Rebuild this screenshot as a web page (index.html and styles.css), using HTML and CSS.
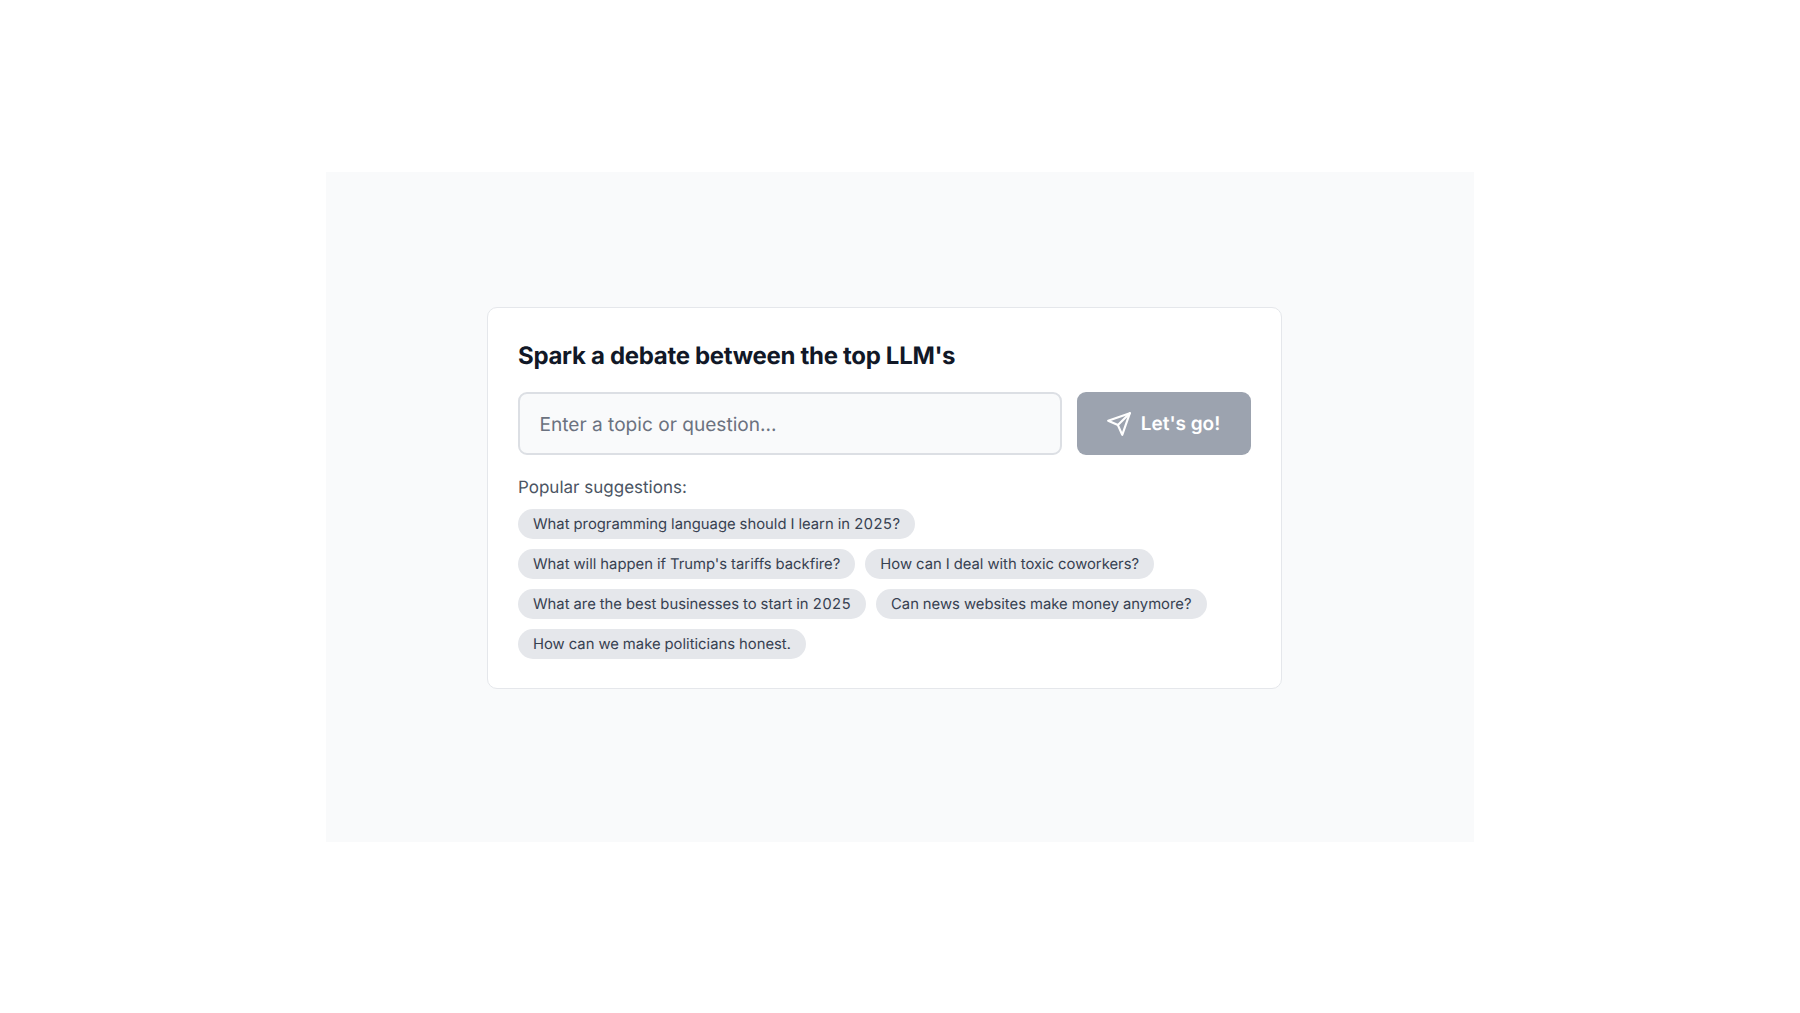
FILE: index.html
```html
<!DOCTYPE html>
<html lang="en">
<head>
  <meta charset="UTF-8" />
  <title>Spark a debate</title>
  <link rel="stylesheet" href="styles.css">
</head>
<body>

<div class="panel">
  <div class="card">
    <h1>Spark a debate between the top LLM's</h1>

    <div class="ask-row">
      <input class="ask-input" type="text" placeholder="Enter a topic or question...">
      <button class="ask-btn">
        <svg class="ask-icon" viewBox="0 0 24 24" fill="none" stroke="currentColor" stroke-width="2" stroke-linecap="round" stroke-linejoin="round">
          <path d="M22 2 11 13"/>
          <path d="M22 2 15 22 11 13 2 9 22 2Z"/>
        </svg>
        Let's go!
      </button>
    </div>

    <p class="suggest-label">Popular suggestions:</p>
    <div class="chips">
      <button class="chip">What programming language should I learn in 2025?</button>
      <button class="chip">What will happen if Trump's tariffs backfire?</button>
      <button class="chip">How can I deal with toxic coworkers?</button>
      <button class="chip">What are the best businesses to start in 2025</button>
      <button class="chip">Can news websites make money anymore?</button>
      <button class="chip">How can we make politicians honest.</button>
    </div>
  </div>
</div>

</body>
</html>
```

FILE: styles.css
```css
* { box-sizing: border-box; }
body {
  margin: 0;
  padding: 172px 0 0 326px;
  background: #fff;
  font-family: Inter, "Liberation Sans", sans-serif;
  text-rendering: geometricPrecision;
}
.panel {
  width: 1148px;
  height: 670px;
  padding-left: 161px;
  background: #f9fafb;
  display: flex;
  align-items: flex-start;
}
.card {
  width: 795px;
  height: 382px;
  margin-top: 135px;
  padding: 32px 30px 0;
  background: #fff;
  border: 1px solid #e5e7eb;
  border-radius: 10px;
}
h1 {
  margin: 0 0 20px;
  font-size: 24px;
  letter-spacing: -0.31px;
  line-height: 32px;
  font-weight: 700;
  color: #111827;
}
.ask-row { display: flex; gap: 15px; }
.ask-input {
  flex: 1;
  height: 63px;
  padding: 0 19.5px;
  font: 19.1px Inter, sans-serif;
  text-rendering: geometricPrecision;
  color: #111827;
  background: #f9fafb;
  border: 2px solid #dcdfe4;
  border-radius: 9px;
}
.ask-input::placeholder { color: #6b7280; opacity: 1; }
.ask-btn {
  width: 174px;
  height: 63px;
  padding: 0 2px 0 0;
  display: flex;
  align-items: center;
  justify-content: center;
  gap: 9px;
  font: 600 19px Inter, sans-serif;
  text-rendering: geometricPrecision;
  color: #fff;
  background: #9ca3af;
  border: none;
  border-radius: 9px;
}
.ask-icon { width: 26px; height: 26px; }
.suggest-label {
  margin: 21.5px 0 9.5px;
  font-size: 17px;
  line-height: 23px;
  color: #4b5563;
}
.chips { display: flex; flex-wrap: wrap; gap: 10px; }
.chip {
  height: 30px;
  padding: 0 15px;
  font: 14.82px Inter, sans-serif;
  font-variant-numeric: tabular-nums;
  text-rendering: geometricPrecision;
  color: #374151;
  background: #e5e7eb;
  border: none;
  border-radius: 15px;
}
```
